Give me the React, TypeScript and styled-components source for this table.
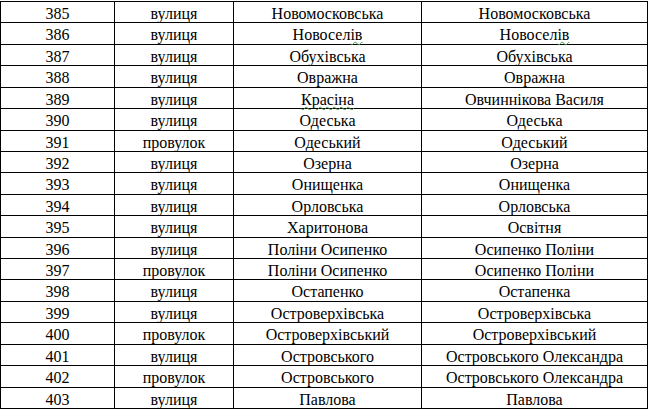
import React from 'react'
import styled, { createGlobalStyle } from 'styled-components'

const GlobalStyle = createGlobalStyle`
  html, body {
    margin: 0;
    padding: 0;
    background: #ffffff;
  }
  body {
    font-family: 'Liberation Serif', serif;
    color: #000000;
  }
`

const Page = styled.div`
  padding-top: 1px;
`

const Sheet = styled.table`
  border-collapse: collapse;
  table-layout: fixed;
  width: 647px;
  font-family: 'Liberation Serif', serif;
  font-size: 16px;
`

const Col = styled.col<{ $w: number }>`
  width: ${p => p.$w}px;
`

const Line = styled.tr<{ $h: number }>`
  height: ${p => p.$h}px;
`

const Cell = styled.td`
  border: 1px solid #000000;
  padding: 2px 0 0;
  text-align: center;
  vertical-align: middle;
  white-space: nowrap;
  line-height: 17px;
  font-family: 'Liberation Serif', serif;
`

const Squiggle = styled.span`
  text-decoration: underline wavy #4a9a4a;
  text-decoration-thickness: 1px;
  text-underline-offset: 1px;
`

type Row = [number, string, React.ReactNode, React.ReactNode]

const rows: Row[] = [
  [385, 'вулиця', 'Новомосковська', 'Новомосковська'],
  [386, 'вулиця', <>Новосел<Squiggle>ів</Squiggle></>, <>Новосел<Squiggle>ів</Squiggle></>],
  [387, 'вулиця', 'Обухівська', 'Обухівська'],
  [388, 'вулиця', 'Овражна', 'Овражна'],
  [389, 'вулиця', <Squiggle>Красіна</Squiggle>, 'Овчиннікова Василя'],
  [390, 'вулиця', 'Одеська', 'Одеська'],
  [391, 'провулок', 'Одеський', 'Одеський'],
  [392, 'вулиця', 'Озерна', 'Озерна'],
  [393, 'вулиця', 'Онищенка', 'Онищенка'],
  [394, 'вулиця', 'Орловська', 'Орловська'],
  [395, 'вулиця', 'Харитонова', 'Освітня'],
  [396, 'вулиця', 'Поліни Осипенко', 'Осипенко Поліни'],
  [397, 'провулок', 'Поліни Осипенко', 'Осипенко Поліни'],
  [398, 'вулиця', 'Остапенко', 'Остапенка'],
  [399, 'вулиця', 'Островерхівська', 'Островерхівська'],
  [400, 'провулок', 'Островерхівський', 'Островерхівський'],
  [401, 'вулиця', 'Островського', 'Островського Олександра'],
  [402, 'провулок', 'Островського', 'Островського Олександра'],
  [403, 'вулиця', 'Павлова', 'Павлова'],
]

// line-to-line pitch alternates 21/22px across the sheet
const heights = [21, 22, 21, 22, 21, 22, 21, 21, 22, 21, 22, 21, 21, 22, 21, 22, 21, 22, 21]

export default function App() {
  return (
    <>
      <GlobalStyle />
      <Page>
        <Sheet>
          <colgroup>
            <Col $w={114} />
            <Col $w={119} />
            <Col $w={188} />
            <Col $w={226} />
          </colgroup>
          <tbody>
            {rows.map(([n, kind, oldName, newName], i) => (
              <Line key={n} $h={heights[i]}>
                <Cell>{n}</Cell>
                <Cell>{kind}</Cell>
                <Cell>{oldName}</Cell>
                <Cell>{newName}</Cell>
              </Line>
            ))}
          </tbody>
        </Sheet>
      </Page>
    </>
  )
}
